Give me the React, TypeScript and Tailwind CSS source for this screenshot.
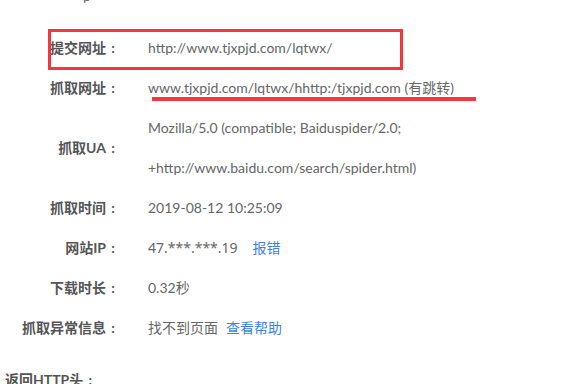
const font = { fontFamily: 'Lato, "Noto Sans CJK SC", sans-serif' };

type Row = { label: string; lines: React.ReactNode[] };

const rows: Row[] = [
  { label: "提交网址", lines: ["http://www.tjxpjd.com/lqtwx/"] },
  { label: "抓取网址", lines: ["www.tjxpjd.com/lqtwx/hhttp:/tjxpjd.com (有跳转)"] },
  {
    label: "抓取UA",
    lines: ["Mozilla/5.0 (compatible; Baiduspider/2.0;", "+http://www.baidu.com/search/spider.html)"],
  },
  { label: "抓取时间", lines: ["2019-08-12 10:25:09"] },
  {
    label: "网站IP",
    lines: [
      <span className="font-['Noto_Sans','Noto_Sans_CJK_SC',sans-serif]">
        47.***.***.19<a className="ml-[15px] text-[#3d7ff0]">报错</a>
      </span>,
    ],
  },
  { label: "下载时长", lines: ["0.32秒"] },
  {
    label: "抓取异常信息",
    lines: [
      <>
        找不到页面<a className="ml-[8px] text-[#3d7ff0]">查看帮助</a>
      </>,
    ],
  },
];

const Colon = () => <span className="inline-block w-[14px] text-center">:</span>;

export default function App() {
  return (
    <div className="relative w-[565px] h-[384px] overflow-hidden bg-white text-[14px] text-[#666]" style={font}>
      <div className="h-[28px] relative">
        <span className="absolute left-[83px] -top-[12px] leading-[15px]">p</span>
      </div>

      <div className="grid grid-cols-[120px_1fr] leading-[40px]">
        {rows.map((r) => (
          <div key={r.label} className="contents">
            <div className="text-right font-bold text-[#555] self-center">
              {r.label}
              <Colon />
            </div>
            <div className="pl-[28px] whitespace-nowrap">
              {r.lines.map((l, i) => (
                <div key={i}>{l}</div>
              ))}
            </div>
          </div>
        ))}
      </div>

      <div className="pl-[5px] pt-[12px] leading-[40px] font-bold text-[#555]">
        返回HTTP头
        <Colon />
      </div>

      {/* annotations */}
      <div className="absolute left-[48px] top-[29px] w-[355px] h-[41px] border-[3px] border-[#f5363a]" />
      <div className="absolute left-[152px] top-[97px] w-[324px] h-[4px] bg-[#f5363a]" />
    </div>
  );
}
